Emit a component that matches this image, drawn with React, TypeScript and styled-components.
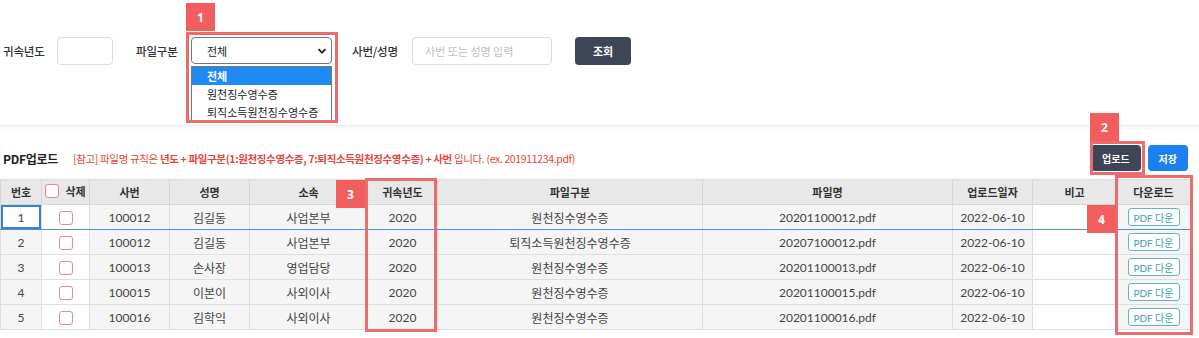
import styled, { createGlobalStyle } from 'styled-components'

interface Row {
  no: number
  empNo: string
  name: string
  dept: string
  year: string
  fileType: string
  fileName: string
  uploadedAt: string
}

const rows: Row[] = [
  { no: 1, empNo: '100012', name: '김길동', dept: '사업본부', year: '2020', fileType: '원천징수영수증', fileName: '20201100012.pdf', uploadedAt: '2022-06-10' },
  { no: 2, empNo: '100012', name: '김길동', dept: '사업본부', year: '2020', fileType: '퇴직소득원천징수영수증', fileName: '20207100012.pdf', uploadedAt: '2022-06-10' },
  { no: 3, empNo: '100013', name: '손사장', dept: '영업담당', year: '2020', fileType: '원천징수영수증', fileName: '20201100013.pdf', uploadedAt: '2022-06-10' },
  { no: 4, empNo: '100015', name: '이본이', dept: '사외이사', year: '2020', fileType: '원천징수영수증', fileName: '20201100015.pdf', uploadedAt: '2022-06-10' },
  { no: 5, empNo: '100016', name: '김학익', dept: '사외이사', year: '2020', fileType: '원천징수영수증', fileName: '20201100016.pdf', uploadedAt: '2022-06-10' },
]

const columns = [
  { key: 'no', label: '번호', width: 41 },
  { key: 'del', label: '삭제', width: 48 },
  { key: 'empNo', label: '사번', width: 80 },
  { key: 'name', label: '성명', width: 80 },
  { key: 'dept', label: '소속', width: 118 },
  { key: 'year', label: '귀속년도', width: 70 },
  { key: 'fileType', label: '파일구분', width: 265 },
  { key: 'fileName', label: '파일명', width: 250 },
  { key: 'uploadedAt', label: '업로드일자', width: 80 },
  { key: 'note', label: '비고', width: 84 },
  { key: 'download', label: '다운로드', width: 74 },
]

const fileTypes = ['전체', '원천징수영수증', '퇴직소득원천징수영수증']

// annotation overlays (callout numbers drawn over the screenshot)
const marks = [
  { n: 1, badge: [186, 3], box: [186, 32, 152, 91] },
  { n: 2, badge: [1090, 113], box: [1090, 141, 55, 34] },
  { n: 3, badge: [336, 180], box: [365, 178, 72, 154] },
  { n: 4, badge: [1087, 205], box: [1115, 175, 78, 160] },
]

const App = () => {
  return (
    <Page>
      <GlobalStyle />
      <SearchBar>
        <Field $after={23}>
          <Label $width={42}>귀속년도</Label>
          <TextInput $width={56} />
        </Field>
        <Field $after={20} $gap={13}>
          <Label $width={42}>파일구분</Label>
          <SelectWrap>
            <Select defaultValue="전체">
              {fileTypes.map((t) => (
                <option key={t}>{t}</option>
              ))}
            </Select>
            <Chevron viewBox="0 0 10 10">
              <path d="M1.5 3.2 L5 6.7 L8.5 3.2" fill="none" stroke="#222" strokeWidth="1.8" />
            </Chevron>
            <OptionList>
              {fileTypes.map((t, i) => (
                <OptionItem key={t} $active={i === 0}>
                  {t}
                </OptionItem>
              ))}
            </OptionList>
          </SelectWrap>
        </Field>
        <Field $after={23}>
          <Label $width={48}>사번/성명</Label>
          <TextInput $width={140} placeholder="사번 또는 성명 입력" />
        </Field>
        <SearchButton>조회</SearchButton>
      </SearchBar>

      <UploadSection>
        <Toolbar>
          <Title>PDF업로드</Title>
          <Notice>
            [참고] 파일명 규칙은 <b>년도 + 파일구분(1:원천징수영수증, 7:퇴직소득원천징수영수증) + 사번</b> 입니다. (ex. 201911234.pdf)
          </Notice>
          <Actions>
            <ActionButton $color="#3e4557">업로드</ActionButton>
            <ActionButton $color="#1c80f0">저장</ActionButton>
          </Actions>
        </Toolbar>

        <Grid>
          <colgroup>
            {columns.map((c) => (
              <col key={c.key} style={{ width: c.width }} />
            ))}
          </colgroup>
          <thead>
            <tr>
              {columns.map((c) => (
                <Th key={c.key}>
                  {c.key === 'del' ? (
                    <HeadCheck>
                      <CheckBox />
                      {c.label}
                    </HeadCheck>
                  ) : (
                    c.label
                  )}
                </Th>
              ))}
            </tr>
          </thead>
          <tbody>
            {rows.map((r, i) => (
              <Tr key={r.no} $selected={i === 0}>
                <Td $focused={i === 0}>{r.no}</Td>
                <Td $white>
                  <CheckBox />
                </Td>
                <Td>{r.empNo}</Td>
                <Td>{r.name}</Td>
                <Td>{r.dept}</Td>
                <Td>{r.year}</Td>
                <Td>{r.fileType}</Td>
                <Td>{r.fileName}</Td>
                <Td>{r.uploadedAt}</Td>
                <Td $white />
                <Td>
                  <DownloadButton>PDF 다운</DownloadButton>
                </Td>
              </Tr>
            ))}
          </tbody>
        </Grid>
      </UploadSection>

      {marks.map((m) => (
        <div key={m.n}>
          <MarkBox style={{ left: m.box[0], top: m.box[1], width: m.box[2], height: m.box[3] }} />
          <Badge style={{ left: m.badge[0], top: m.badge[1] }}>{m.n}</Badge>
        </div>
      ))}
    </Page>
  )
}

export default App

const GlobalStyle = createGlobalStyle`
  body {
    margin: 0;
    background: #fff;
    font-family: Lato, "Noto Sans CJK KR", sans-serif;
    color: #333;
  }
`

const Page = styled.div`
  position: relative;
  width: 1199px;
  height: 338px;
  overflow: hidden;
`

const SearchBar = styled.div`
  display: flex;
  align-items: center;
  height: 126px;
  padding: 0 0 24px 3px;
  box-sizing: border-box;
  border-bottom: 1px solid #ececec;
  box-shadow: 0 2px 4px rgba(0, 0, 0, 0.05);
`

const Field = styled.div<{ $gap?: number; $after: number }>`
  display: flex;
  align-items: center;
  gap: ${({ $gap }) => $gap ?? 12}px;
  margin-right: ${({ $after }) => $after}px;
`

const Label = styled.span<{ $width: number }>`
  width: ${({ $width }) => $width}px;
  white-space: nowrap;
  font-family: "Noto Sans CJK KR", sans-serif;
  font-size: 11.5px;
  font-weight: 500;
  color: #333;
  letter-spacing: -0.2px;
`

const TextInput = styled.input<{ $width: number }>`
  width: ${({ $width }) => $width}px;
  height: 28px;
  box-sizing: border-box;
  border: 1px solid #dcdcdc;
  border-radius: 4px;
  padding: 0 12px;
  font-family: "Noto Sans CJK KR", sans-serif;
  font-size: 11px;
  outline: none;

  &::placeholder {
    color: #c0c0c0;
  }
`

const SelectWrap = styled.div`
  position: relative;
  width: 141px;
  height: 27px;
`

const Select = styled.select`
  appearance: none;
  width: 100%;
  height: 100%;
  box-sizing: border-box;
  border: 1px solid #767676;
  border-radius: 4px;
  background: #fff;
  padding: 0 0 0 15px;
  font-family: "Noto Sans CJK KR", sans-serif;
  font-size: 11px;
  color: #222;
`

const Chevron = styled.svg`
  position: absolute;
  right: 5px;
  top: 9px;
  width: 10px;
  height: 10px;
  pointer-events: none;
`

const OptionList = styled.div`
  position: absolute;
  top: 29px;
  left: 0;
  width: 141px;
  box-sizing: border-box;
  border: 1px solid #767676;
  border-bottom: none;
  background: #fff;
  z-index: 5;
`

const OptionItem = styled.div<{ $active?: boolean }>`
  height: 18px;
  line-height: 18px;
  padding-left: 15px;
  font-family: "Noto Sans CJK KR", sans-serif;
  font-size: 11px;
  font-weight: ${({ $active }) => ($active ? 700 : 400)};
  color: ${({ $active }) => ($active ? '#fff' : '#222')};
  background: ${({ $active }) => ($active ? '#1e8af2' : '#fff')};
`

const SearchButton = styled.button`
  width: 56px;
  height: 28px;
  border: none;
  border-radius: 4px;
  background: #3e4557;
  color: #fff;
  font-family: "Noto Sans CJK KR", sans-serif;
  font-size: 11px;
  font-weight: 700;
`

const UploadSection = styled.div`
  padding: 19px 11px 0 0;
`

const Toolbar = styled.div`
  display: flex;
  align-items: center;
  height: 26px;
  margin-bottom: 8px;
`

const Title = styled.span`
  padding-left: 3px;
  width: 70px;
  font-family: "Noto Sans CJK KR", sans-serif;
  font-size: 12px;
  font-weight: 700;
  color: #222;
  letter-spacing: -0.3px;
`

const Notice = styled.span`
  font-family: "Noto Sans CJK KR", sans-serif;
  font-size: 10.5px;
  color: #e8433c;
  letter-spacing: -0.35px;

  b {
    font-weight: 700;
  }
`

const Actions = styled.div`
  display: flex;
  gap: 7px;
  margin-left: auto;
`

const ActionButton = styled.button<{ $color: string }>`
  height: 26px;
  padding: 0 11px;
  border: none;
  border-radius: 4px;
  background: ${({ $color }) => $color};
  color: #fff;
  font-family: "Noto Sans CJK KR", sans-serif;
  font-size: 10px;
  font-weight: 700;
`

const Grid = styled.table`
  width: 1190px;
  table-layout: fixed;
  border-collapse: collapse;
  font-size: 12px;
`

const Th = styled.th`
  height: 24px;
  padding: 0;
  background: #e8e8e8;
  border: 1px solid #d6d6d6;
  border-top-color: #dedede;
  font-family: "Noto Sans CJK KR", sans-serif;
  font-size: 11px;
  font-weight: 700;
  color: #333;
  text-align: center;
`

const HeadCheck = styled.span`
  display: inline-flex;
  align-items: center;
  gap: 6px;
`

const Tr = styled.tr<{ $selected?: boolean }>`
  td {
    border-top: 1px solid ${({ $selected }) => ($selected ? '#4f8fda' : '#dedede')};
    border-bottom: 1px solid ${({ $selected }) => ($selected ? '#4f8fda' : '#dedede')};
  }
`

const Td = styled.td<{ $white?: boolean; $focused?: boolean }>`
  height: 24px;
  padding: 0;
  border-left: 1px solid #dedede;
  border-right: 1px solid #dedede;
  background: ${({ $white, $focused }) => ($white || $focused ? '#fff' : '#f5f5f5')};
  box-shadow: ${({ $focused }) => ($focused ? 'inset 0 0 0 2px #3b80d2' : 'none')};
  font-family: Lato, "Noto Sans CJK KR", sans-serif;
  font-size: 12px;
  color: #444;
  text-align: center;
  vertical-align: middle;
`

const CheckBox = styled.span`
  display: inline-block;
  width: 12px;
  height: 12px;
  border: 1px solid #e58a8c;
  border-radius: 3px;
  background: #fff;
  vertical-align: middle;
`

const DownloadButton = styled.button`
  height: 18px;
  padding: 0 5px;
  border: 1px solid #63b3c4;
  border-radius: 3px;
  background: #fff;
  color: #3d9cb6;
  font-family: Lato, "Noto Sans CJK KR", sans-serif;
  font-size: 10px;
  vertical-align: middle;
`

const MarkBox = styled.div`
  position: absolute;
  box-sizing: border-box;
  border: 3px solid #ec6b6d;
  pointer-events: none;
  z-index: 10;
`

const Badge = styled.div`
  position: absolute;
  width: 29px;
  height: 28px;
  background: #f25d5d;
  color: #fff;
  font-family: "Noto Sans", sans-serif;
  font-size: 12px;
  font-weight: 700;
  display: flex;
  align-items: center;
  justify-content: center;
  z-index: 11;
`
